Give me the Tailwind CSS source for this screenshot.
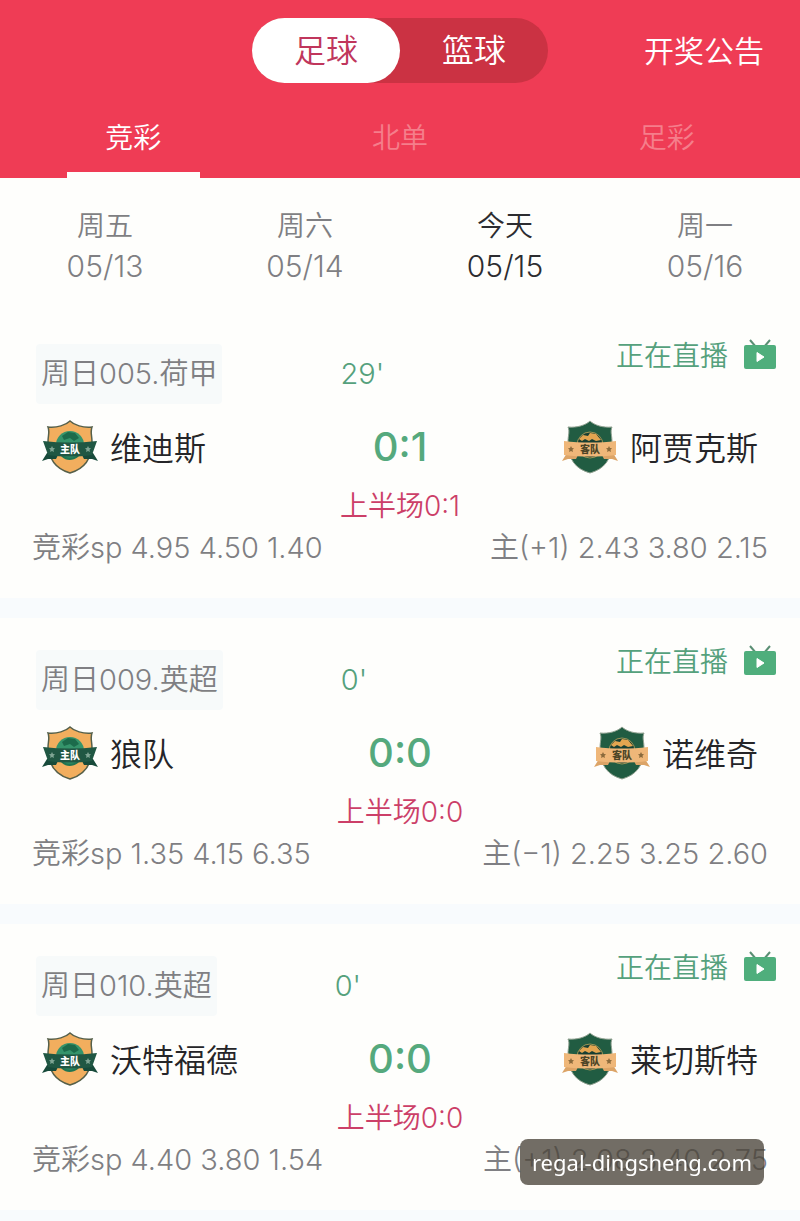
<!DOCTYPE html>
<html lang="zh-CN">
<head>
  <meta charset="UTF-8">
  <meta name="viewport" content="width=device-width, initial-scale=1">
  <title>竞彩比分</title>
  <script src="https://cdn.jsdelivr.net/npm/@tailwindcss/browser@4"></script>
</head>
<body class="bg-[#fefefc] text-[28px] leading-10 font-[350] text-[#7f7f83] font-[Inter,'Noto_Sans_CJK_SC',sans-serif]">
  <svg class="hidden">
    <symbol id="badge-home" viewBox="0 0 56 54">
      <path d="M28 1c4 4 13 7 22 6-2 5 0 8 0 15 0 18-8 27-22 31C14 49 6 40 6 22c0-7 2-10 0-15 9 1 18-2 22-6z" fill="#f2ae5e" stroke="#56604a" stroke-width="1.5"/>
      <circle cx="28" cy="25" r="14" fill="#35946b"/>
      <path d="M20 16l6-4 7 1 4 5-5 3-4-3-6 2z" fill="#1c6b4b"/>
      <path d="M17 33c6 6 16 6 22 0l-3 4c-5 4-12 4-16 0z" fill="#1f7552"/>
      <path d="M0 41l5-8h12l-3 6H6zM56 41l-5-8H39l3 6h8z" fill="#174a3a"/>
      <path d="M1 21c18 2 36 2 54 0l-5 14c-15 2-29 2-44 0z" fill="#205743"/>
      <path d="M10 26l1 2 2 .3-1.500 1.500.4 2.200-1.900-1-1.900 1 .4-2.200L7 28.300l2-.3zM46 26l1 2 2 .3-1.500 1.500.4 2.200-1.900-1-1.900 1 .4-2.200-1.500-1.500 2-.3z" fill="#7fa594"/>
      <text x="28" y="33" text-anchor="middle" font-size="10" font-weight="900" fill="#fff">主队</text>
    </symbol>
    <symbol id="badge-away" viewBox="0 0 56 54">
      <path d="M28 1c4 4 13 7 22 6-2 5 0 8 0 15 0 18-8 27-22 31C14 49 6 40 6 22c0-7 2-10 0-15 9 1 18-2 22-6z" fill="#215c42" stroke="#8fa08f" stroke-width="1"/>
      <circle cx="28" cy="25" r="13" fill="#173f33" stroke="#9c9556"/>
      <path d="M17 19l4-4 5 1 2-3 6 1 5 6-5 1-4-2-3 2-4-2-3 2z" fill="#e3a550"/>
      <path d="M0 41l5-8h12l-3 6H6zM56 41l-5-8H39l3 6h8z" fill="#dca467"/>
      <path d="M2 21c17 2 35 2 52 0v14c-17 2-35 2-52 0z" fill="#efb779"/>
      <path d="M9 26l1 2 2 .3-1.500 1.500.4 2.200-1.900-1-1.900 1 .4-2.200L6 28.300l2-.3zM47 26l1 2 2 .3-1.500 1.500.4 2.200-1.900-1-1.900 1 .4-2.200-1.500-1.500 2-.3z" fill="#8a6a3c"/>
      <text x="28" y="33" text-anchor="middle" font-size="10" font-weight="900" fill="#4c4527">客队</text>
    </symbol>
    <symbol id="tv" viewBox="0 0 32 30">
      <path d="M6 1l6 7M26 1l-6 7" fill="none" stroke="#5a8f74" stroke-width="2"/>
      <rect y="6" width="32" height="24" rx="2" fill="#4fae7c"/>
      <path d="M13 13.500v9l7-4.500z" fill="#fff" stroke="#fff" stroke-linejoin="round"/>
    </symbol>
  </svg>

  <header class="bg-[#ef3c55] text-white">
    <div class="grid grid-cols-[1fr_auto_1fr] items-center pt-[18px]">
      <div></div>
      <div class="flex rounded-full bg-[#cb3243] text-[32px]">
        <button class="h-[65px] w-[148px] rounded-full bg-white text-[#c0365c]">足球</button>
        <button class="h-[65px] w-[148px] rounded-full">篮球</button>
      </div>
      <a href="#" class="mr-9 justify-self-end text-[30px]">开奖公告</a>
    </div>
    <nav class="grid grid-cols-3 pt-[35px]">
      <a href="#" class="flex flex-col items-center">竞彩<span class="mt-[14px] h-[6px] w-1/2 bg-[#fefefc]"></span></a>
      <a href="#" class="text-center text-[#f57e8b]">北单</a>
      <a href="#" class="text-center text-[#f57e8b]">足彩</a>
    </nav>
  </header>

  <nav class="grid grid-cols-4 pt-7 pb-[26px] text-center">
    <a href="#" class="pl-[10px]">周五<div class="text-[30px]">05/13</div></a>
    <a href="#" class="pl-[10px]">周六<div class="text-[30px]">05/14</div></a>
    <a href="#" class="pl-[10px] text-[#2c2c30]">今天<div class="text-[30px]">05/15</div></a>
    <a href="#" class="pl-[10px]">周一<div class="text-[30px]">05/16</div></a>
  </nav>

  <main id="matches"></main>

  <div class="fixed right-9 bottom-9 rounded-lg bg-[#4a443a]/78 px-3 py-[5px] text-[22px] leading-9 font-normal text-white font-['Noto_Sans',sans-serif]">regal-dingsheng.com</div>

  <script>
    const matches = [
      { tag: "周日005.荷甲", minute: "29'", home: "维迪斯", away: "阿贾克斯", score: "0:1", half: "0:1", sp: "4.95 4.50 1.40", rq: "主(+1) 2.43 3.80 2.15" },
      { tag: "周日009.英超", minute: "0'", home: "狼队", away: "诺维奇", score: "0:0", half: "0:0", sp: "1.35 4.15 6.35", rq: "主(−1) 2.25 3.25 2.60" },
      { tag: "周日010.英超", minute: "0'", home: "沃特福德", away: "莱切斯特", score: "0:0", half: "0:0", sp: "4.40 3.80 1.54", rq: "主(+1) 2.08 3.40 2.75" }
    ];

    document.getElementById("matches").innerHTML = matches.map(m => `
      <section class="border-b-20 border-[#f8fbfd] pt-8 pb-[30px]">
        <div class="flex items-start pr-6 pl-9">
          <div class="rounded bg-[#f7fafa] px-[5px] py-[10px] text-[29px]">${m.tag}</div>
          <div class="ml-[118px] py-[10px] text-[29px] text-[#55a17c]">${m.minute}</div>
          <a href="#" class="-mt-2 ml-auto flex items-center gap-4 text-[#55a17c]">正在直播<svg class="mb-1 h-[30px] w-8"><use href="#tv"/></svg></a>
        </div>
        <div class="grid grid-cols-[1fr_auto_1fr] items-center px-[42px] pt-4 text-[32px] text-[#252528]">
          <div class="flex items-center gap-3"><svg class="h-[54px] w-14"><use href="#badge-home"/></svg><span class="pt-1">${m.home}</span></div>
          <div class="text-[40px] font-medium text-[#55a97d]">${m.score}</div>
          <div class="flex items-center justify-end gap-3"><svg class="h-[54px] w-14"><use href="#badge-away"/></svg><span class="pt-1">${m.away}</span></div>
        </div>
        <div class="pt-3 text-center text-[#cc3f68]">上半场${m.half}</div>
        <div class="flex justify-between px-8 pt-[2px] text-[29px]"><span>竞彩sp ${m.sp}</span><span>${m.rq}</span></div>
      </section>`).join("");
  </script>
</body>
</html>
